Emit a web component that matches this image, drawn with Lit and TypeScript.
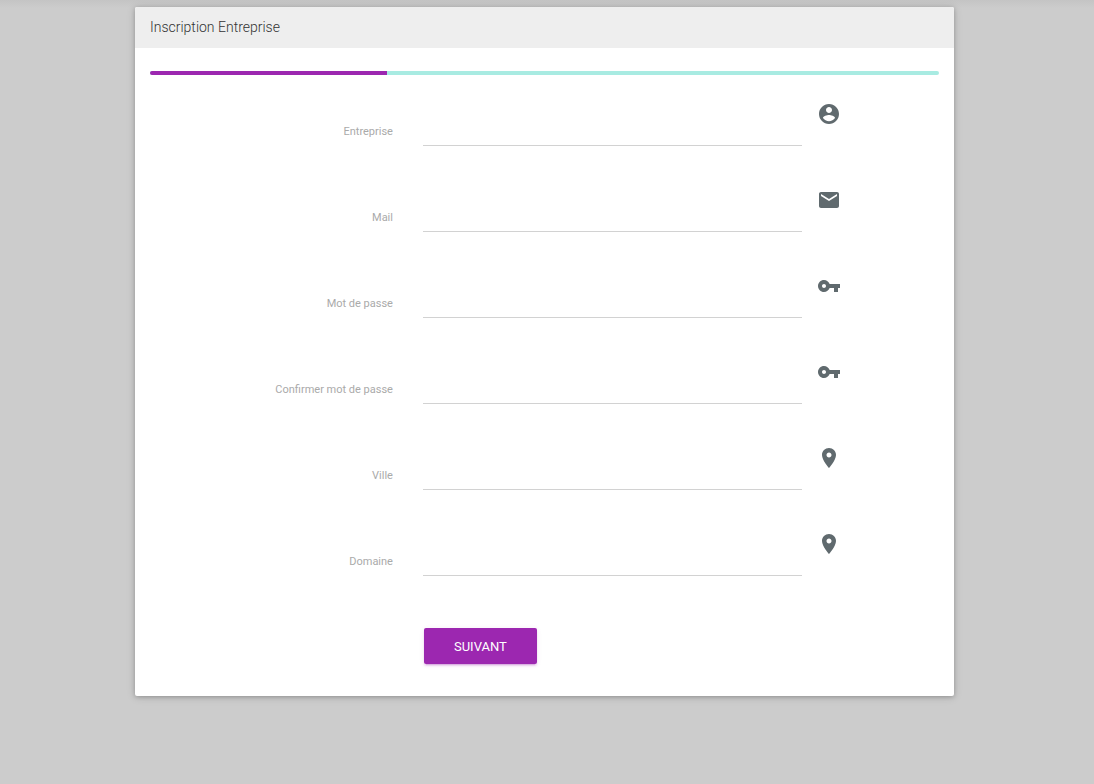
import { LitElement, html, css, svg } from "lit";
import { customElement } from "lit/decorators.js";

const ICONS: Record<string, string> = {
  account:
    "M12 2C6.48 2 2 6.48 2 12s4.48 10 10 10 10-4.48 10-10S17.52 2 12 2zm0 3c1.66 0 3 1.34 3 3s-1.34 3-3 3-3-1.34-3-3 1.34-3 3-3zm0 14.2c-2.5 0-4.71-1.28-6-3.22.03-1.99 4-3.08 6-3.08 1.99 0 5.97 1.09 6 3.08-1.29 1.94-3.5 3.22-6 3.22z",
  email:
    "M20 4H4c-1.1 0-1.99.9-1.99 2L2 18c0 1.1.9 2 2 2h16c1.1 0 2-.9 2-2V6c0-1.1-.9-2-2-2zm0 4l-8 5-8-5V6l8 5 8-5v2z",
  key: "M12.65 10C11.83 7.67 9.61 6 7 6c-3.31 0-6 2.69-6 6s2.69 6 6 6c2.61 0 4.83-1.67 5.65-4H17v4h4v-4h2v-4H12.65zM7 14c-1.1 0-2-.9-2-2s.9-2 2-2 2 .9 2 2-.9 2-2 2z",
  place:
    "M12 2C8.13 2 5 5.13 5 9c0 5.25 7 13 7 13s7-7.75 7-13c0-3.87-3.13-7-7-7zm0 9.5c-1.38 0-2.5-1.12-2.5-2.5s1.12-2.5 2.5-2.5 2.5 1.12 2.5 2.5-1.12 2.5-2.5 2.5z",
};

const FIELDS = [
  { id: "entreprise", label: "Entreprise", type: "text", icon: "account" },
  { id: "mail", label: "Mail", type: "email", icon: "email" },
  { id: "password", label: "Mot de passe", type: "password", icon: "key" },
  { id: "confirm", label: "Confirmer mot de passe", type: "password", icon: "key" },
  { id: "ville", label: "Ville", type: "text", icon: "place" },
  { id: "domaine", label: "Domaine", type: "text", icon: "place" },
];

@customElement("app-root")
export class AppRoot extends LitElement {
  static styles = css`
    :host {
      display: block;
      box-sizing: border-box;
      min-height: 100vh;
      padding: 7px 140px 24px 135px;
      background: #ccc linear-gradient(#c4c4c4, #ccc) top / 100% 8px no-repeat;
      font-family: Roboto, sans-serif;
    }
    .card {
      background: #fff;
      border-radius: 2px;
      box-shadow: 0 1px 4px rgba(0, 0, 0, 0.2), 0 1px 10px rgba(0, 0, 0, 0.14);
      overflow: hidden;
    }
    .title {
      margin: 0;
      padding: 0 15px;
      background: #eee;
      color: #333;
      font-size: 14px;
      font-weight: 300;
      line-height: 41px;
    }
    .body {
      padding: 23px 15px 32px;
    }
    .track {
      height: 4px;
      border-radius: 2px;
      background: #a8ebe2;
      overflow: hidden;
    }
    .fill {
      height: 100%;
      background: #9c27b0;
    }
    form {
      display: grid;
      margin: 0 -15px;
    }
    .row,
    .actions {
      display: grid;
      grid-template-columns: 33.33% 49.95% 1fr;
    }
    .row {
      height: 86px;
    }
    .actions {
      margin-top: 37px;
    }
    .action {
      grid-column: 2;
      padding: 0 16px;
    }
    label {
      padding: 49px 15px 0;
      color: #aaa;
      font-size: 11px;
      line-height: 16px;
      text-align: right;
    }
    .field {
      padding: 35px 15px 0;
    }
    input {
      display: block;
      box-sizing: border-box;
      width: 100%;
      height: 36px;
      padding: 0;
      border: 0;
      border-bottom: 1px solid #d2d2d2;
      outline: none;
      background: none;
      font: 400 14px Roboto, sans-serif;
    }
    svg {
      width: 24px;
      height: 24px;
      margin-top: 27px;
      fill: #606a6e;
    }
    button {
      display: block;
      height: 36px;
      padding: 0 30px;
      border: 0;
      border-radius: 2px;
      background: #9c27b0;
      box-shadow: 0 2px 2px rgba(156, 39, 176, 0.14), 0 3px 1px -2px rgba(156, 39, 176, 0.2),
        0 1px 5px rgba(156, 39, 176, 0.12);
      color: #fff;
      font: 400 13px Roboto, sans-serif;
      text-transform: uppercase;
    }
  `;

  render() {
    return html`
      <main class="card">
        <h1 class="title">Inscription Entreprise</h1>
        <div class="body">
          <div class="track" role="progressbar" aria-valuenow="30" aria-valuemin="0" aria-valuemax="100">
            <div class="fill" style="width: 30%"></div>
          </div>
          <form>
            ${FIELDS.map(
              (f) => html`
                <div class="row">
                  <label for=${f.id}>${f.label}</label>
                  <div class="field"><input id=${f.id} type=${f.type} /></div>
                  <svg viewBox="0 0 24 24" aria-hidden="true">${svg`<path d=${ICONS[f.icon]} />`}</svg>
                </div>
              `
            )}
            <div class="actions">
              <div class="action"><button type="button">Suivant</button></div>
            </div>
          </form>
        </div>
      </main>
    `;
  }
}
